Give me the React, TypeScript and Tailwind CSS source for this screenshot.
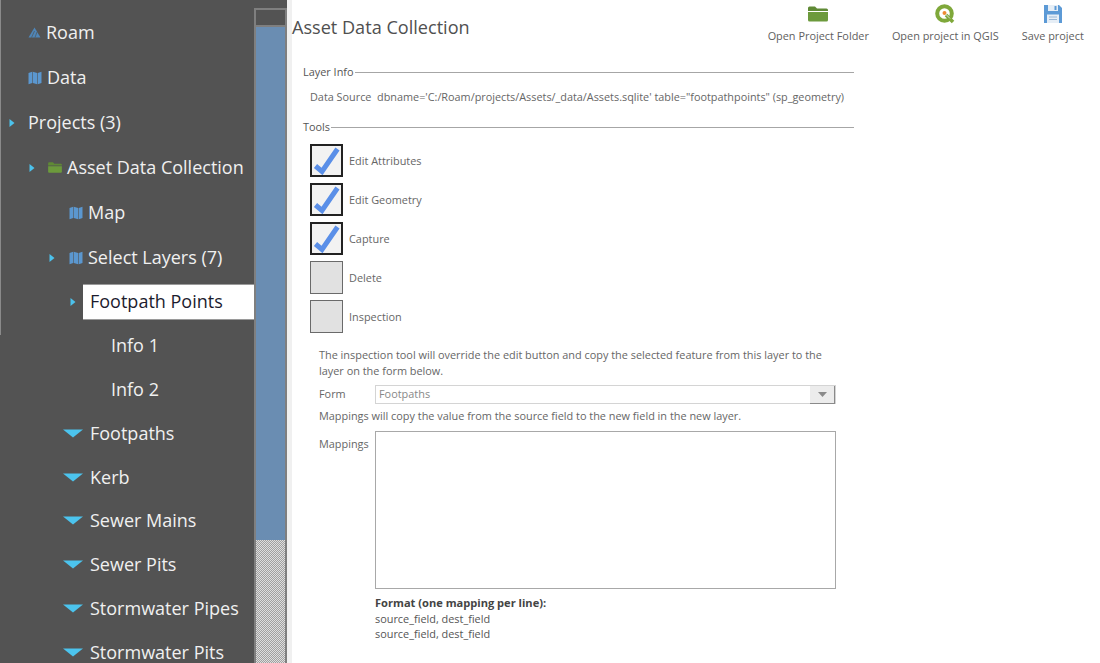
import React from "react";

const font = { fontFamily: '"Open Sans", "Noto Sans", sans-serif' };

function MapIcon() {
  return (
    <svg width="14" height="14" viewBox="0 0 14 14" className="shrink-0">
      <path d="M0.5 2 L4.2 0.8 V12 L0.5 13.2 Z M4.8 0.8 L9.2 2 V13.2 L4.8 12 Z M9.8 2 L13.5 0.8 V12 L9.8 13.2 Z" fill="#5b97cf" />
    </svg>
  );
}
function RoamIcon() {
  return (
    <svg width="13" height="11" viewBox="0 0 13 11" className="shrink-0">
      <path d="M6.5 0.5 L12.5 10.5 H0.5 Z" fill="#4f86b8" />
      <path d="M6.5 4 L3.5 10.5 M9 5 L7 10.5" stroke="#535353" strokeWidth="0.7" />
    </svg>
  );
}
function FolderIcon({ w = 14, h = 11 }: { w?: number; h?: number }) {
  return (
    <svg width={w} height={h} viewBox="0 0 20 16" className="shrink-0">
      <path d="M0 2 Q0 0.5 1.5 0.5 H7 L9 2.5 H18.5 Q20 2.5 20 4 V5 H0 Z" fill="#5f8a35" />
      <path d="M0 6 H20 V14 Q20 15.5 18.5 15.5 H1.5 Q0 15.5 0 14 Z" fill="#6c9a3c" />
    </svg>
  );
}
function Right() {
  return (
    <svg width="6" height="10" viewBox="0 0 6 10" className="shrink-0">
      <path d="M0.5 1 L5.5 5 L0.5 9 Z" fill="#4cc2ec" />
    </svg>
  );
}
function Down() {
  return (
    <svg width="20" height="9" viewBox="0 0 20 9" className="shrink-0">
      <path d="M0 0.5 H20 L10 8.5 Z" fill="#4cc4ee" />
    </svg>
  );
}

function Row({ children, h = "h-[45px]", pl }: { children: React.ReactNode; h?: string; pl: string }) {
  return <div className={`flex items-center ${h} ${pl} text-[18px] text-[#f0f0f0] whitespace-nowrap`}>{children}</div>;
}

function Layer({ name, h }: { name: string; h: string }) {
  return (
    <Row h={h} pl="pl-[63px]">
      <Down />
      <span className="ml-[7px]">{name}</span>
    </Row>
  );
}

function Sidebar() {
  return (
    <div className="relative w-[254px] shrink-0 bg-[#535353] overflow-hidden pt-[10px]">
      <div className="absolute left-0 top-0 w-px h-[335px] bg-[#8a8a8a]" />
      <Row pl="pl-[28px]">
        <RoamIcon />
        <span className="ml-[5px]">Roam</span>
      </Row>
      <Row pl="pl-[28px]">
        <MapIcon />
        <span className="ml-[5px]">Data</span>
      </Row>
      <Row pl="pl-[9px]">
        <Right />
        <span className="ml-[13px]">Projects (3)</span>
      </Row>
      <Row pl="pl-[29px]">
        <Right />
        <span className="ml-[13px]"><FolderIcon /></span>
        <span className="ml-[5px]">Asset Data Collection</span>
      </Row>
      <Row pl="pl-[69px]">
        <MapIcon />
        <span className="ml-[5px]">Map</span>
      </Row>
      <Row pl="pl-[49px]">
        <Right />
        <span className="ml-[14px]"><MapIcon /></span>
        <span className="ml-[5px]">Select Layers (7)</span>
      </Row>
      <div className="flex items-center h-[43px] pl-[70px]">
        <Right />
        <div className="ml-[7px] flex-1 h-[36px] bg-white flex items-center pl-[7px] text-[18px] text-[#1c1c2e] whitespace-nowrap border-y border-[#9a9a9a]">
          Footpath Points
        </div>
      </div>
      <Row h="h-[44px]" pl="pl-[111px]">Info 1</Row>
      <Row h="h-[44px]" pl="pl-[111px]">Info 2</Row>
      <Layer name="Footpaths" h="h-[44px]" />
      <Layer name="Kerb" h="h-[44px]" />
      <Layer name="Sewer Mains" h="h-[43px]" />
      <Layer name="Sewer Pits" h="h-[44px]" />
      <Layer name="Stormwater Pipes" h="h-[44px]" />
      <Layer name="Stormwater Pits" h="h-[44px]" />
    </div>
  );
}

function Scrollbar() {
  return (
    <div className="w-[33px] shrink-0 bg-[#535353] flex flex-col pt-[8px]">
      <div className="h-[19px] border-2 border-[#7f7f7f] bg-[#535353]" />
      <div className="h-[513px] bg-[#6a8db2] border-x-2 border-[#7f7f7f]" />
      <div className="flex-1 border-x-2 border-[#7f7f7f] bg-[repeating-conic-gradient(#a0a0a0_0_25%,#dedede_0_50%)] bg-[length:2px_2px]" />
    </div>
  );
}

function QgisIcon() {
  return (
    <svg width="20" height="20" viewBox="0 0 20 20">
      <circle cx="9.5" cy="9.5" r="7.3" fill="none" stroke="#7fa83a" strokeWidth="4" />
      <path d="M11 11 L18 18" stroke="#7fa83a" strokeWidth="3.6" />
      <circle cx="9.5" cy="9" r="2" fill="#ee8b32" />
      <path d="M11 10.5 L15 14.5" stroke="#d8d8d8" strokeWidth="1" />
    </svg>
  );
}
function SaveIcon() {
  return (
    <svg width="20" height="20" viewBox="0 0 20 20">
      <path d="M1 1 H16 L19 4 V19 H1 Z" fill="#5c9ad6" />
      <rect x="5" y="1" width="10" height="6" fill="#e6eef6" />
      <rect x="11.5" y="2" width="2" height="4" fill="#5c9ad6" />
      <rect x="4" y="10.5" width="12" height="8.5" fill="#e6eef6" />
      <path d="M6 13 H14 M6 15.5 H14" stroke="#9ab8d6" strokeWidth="1" />
    </svg>
  );
}

function ToolButton({ icon, label, className }: { icon: React.ReactNode; label: string; className: string }) {
  return (
    <div className={`flex flex-col items-center ${className}`}>
      <div className="h-[20px] flex items-center">{icon}</div>
      <div className="mt-[5px] text-[10.9px] leading-[14px] text-[#606060] whitespace-nowrap">{label}</div>
    </div>
  );
}

function SectionTitle({ title }: { title: string }) {
  return (
    <div className="flex items-center text-[10.9px] leading-[14px] text-[#555]">
      <span>{title}</span>
      <div className="flex-1 h-px bg-[#a6a6a6] ml-px" />
    </div>
  );
}

function Check({ label, on }: { label: string; on: boolean }) {
  return (
    <div className="flex items-center h-[33px] mb-[6px]">
      {on ? (
        <div className="w-[33px] h-[33px] border-2 border-[#222] bg-[#f2f2f2] flex items-center justify-center">
          <svg width="29" height="29" viewBox="0 0 29 29">
            <path d="M3.5 20 L10 25.5 L25.5 3" fill="none" stroke="#5a8fe8" strokeWidth="5" />
          </svg>
        </div>
      ) : (
        <div className="w-[33px] h-[33px] border border-[#6a6a6a] bg-[#e1e1e1]" />
      )}
      <span className="ml-[6px] pt-[2px] text-[10.9px] text-[#666]">{label}</span>
    </div>
  );
}

export default function App() {
  return (
    <div className="flex h-[663px] w-[1100px] overflow-hidden bg-white" style={font}>
      <Sidebar />
      <Scrollbar />
      <div className="w-[5px] shrink-0 bg-[#f0f0f0]" />
      <div className="flex-1 min-w-0">
        <div className="flex h-[65px]">
          <div className="text-[18.1px] leading-[24px] text-[#505050] mt-[15px] whitespace-nowrap">Asset Data Collection</div>
          <div className="flex pt-[4px]">
            <ToolButton icon={<FolderIcon w={20} h={16} />} label="Open Project Folder" className="ml-[298px]" />
            <ToolButton icon={<QgisIcon />} label="Open project in QGIS" className="ml-[23px]" />
            <ToolButton icon={<SaveIcon />} label="Save project" className="ml-[23px]" />
          </div>
        </div>
        <div className="ml-[11px] w-[551px]">
          <SectionTitle title="Layer Info" />
          <div className="ml-[7px] mt-[11px] h-[14px] text-[10.85px] leading-[14px] text-[#666] whitespace-nowrap">
            Data Source&nbsp;&nbsp;dbname='C:/Roam/projects/Assets/_data/Assets.sqlite' table="footpathpoints" (sp_geometry)
          </div>
          <div className="mt-[16px]">
            <SectionTitle title="Tools" />
          </div>
          <div className="ml-[7px] mt-[10px]">
            <Check label="Edit Attributes" on />
            <Check label="Edit Geometry" on />
            <Check label="Capture" on />
            <Check label="Delete" on={false} />
            <Check label="Inspection" on={false} />
          </div>
          <div className="ml-[16px] w-[517px]">
            <p className="mt-[14px] w-[505px] text-[10.9px] leading-[16px] text-[#666]">
              The inspection tool will override the edit button and copy the selected feature from this layer to the layer on the form below.
            </p>
            <div className="flex items-center mt-[6px]">
              <span className="w-[56px] text-[10.9px] text-[#666]">Form</span>
              <div className="w-[461px] h-[19px] border border-[#d4d4d4] flex items-center justify-between pl-[3px]">
                <span className="text-[10.9px] text-[#888]">Footpaths</span>
                <div className="w-[25px] h-[18px] bg-[#ececec] border-r border-b border-[#8a8a8a] flex items-center justify-center">
                  <svg width="9" height="5" viewBox="0 0 9 5"><path d="M0 0 H9 L4.5 5 Z" fill="#8a8a8a" /></svg>
                </div>
              </div>
            </div>
            <p className="mt-[4px] text-[10.9px] leading-[16px] text-[#666]">
              Mappings will copy the value from the source field to the new field in the new layer.
            </p>
            <div className="flex mt-[7px]">
              <span className="w-[56px] pt-[5px] text-[10.9px] leading-[16px] text-[#666]">Mappings</span>
              <div className="w-[461px] h-[158px] border border-[#a8a8a8] bg-white" />
            </div>
            <div className="ml-[56px] mt-[6px] text-[10.9px] leading-[15.5px] text-[#555]">
              <div className="font-bold text-[11.1px] text-[#444]">Format (one mapping per line):</div>
              <div>source_field, dest_field</div>
              <div>source_field, dest_field</div>
            </div>
          </div>
        </div>
      </div>
    </div>
  );
}
